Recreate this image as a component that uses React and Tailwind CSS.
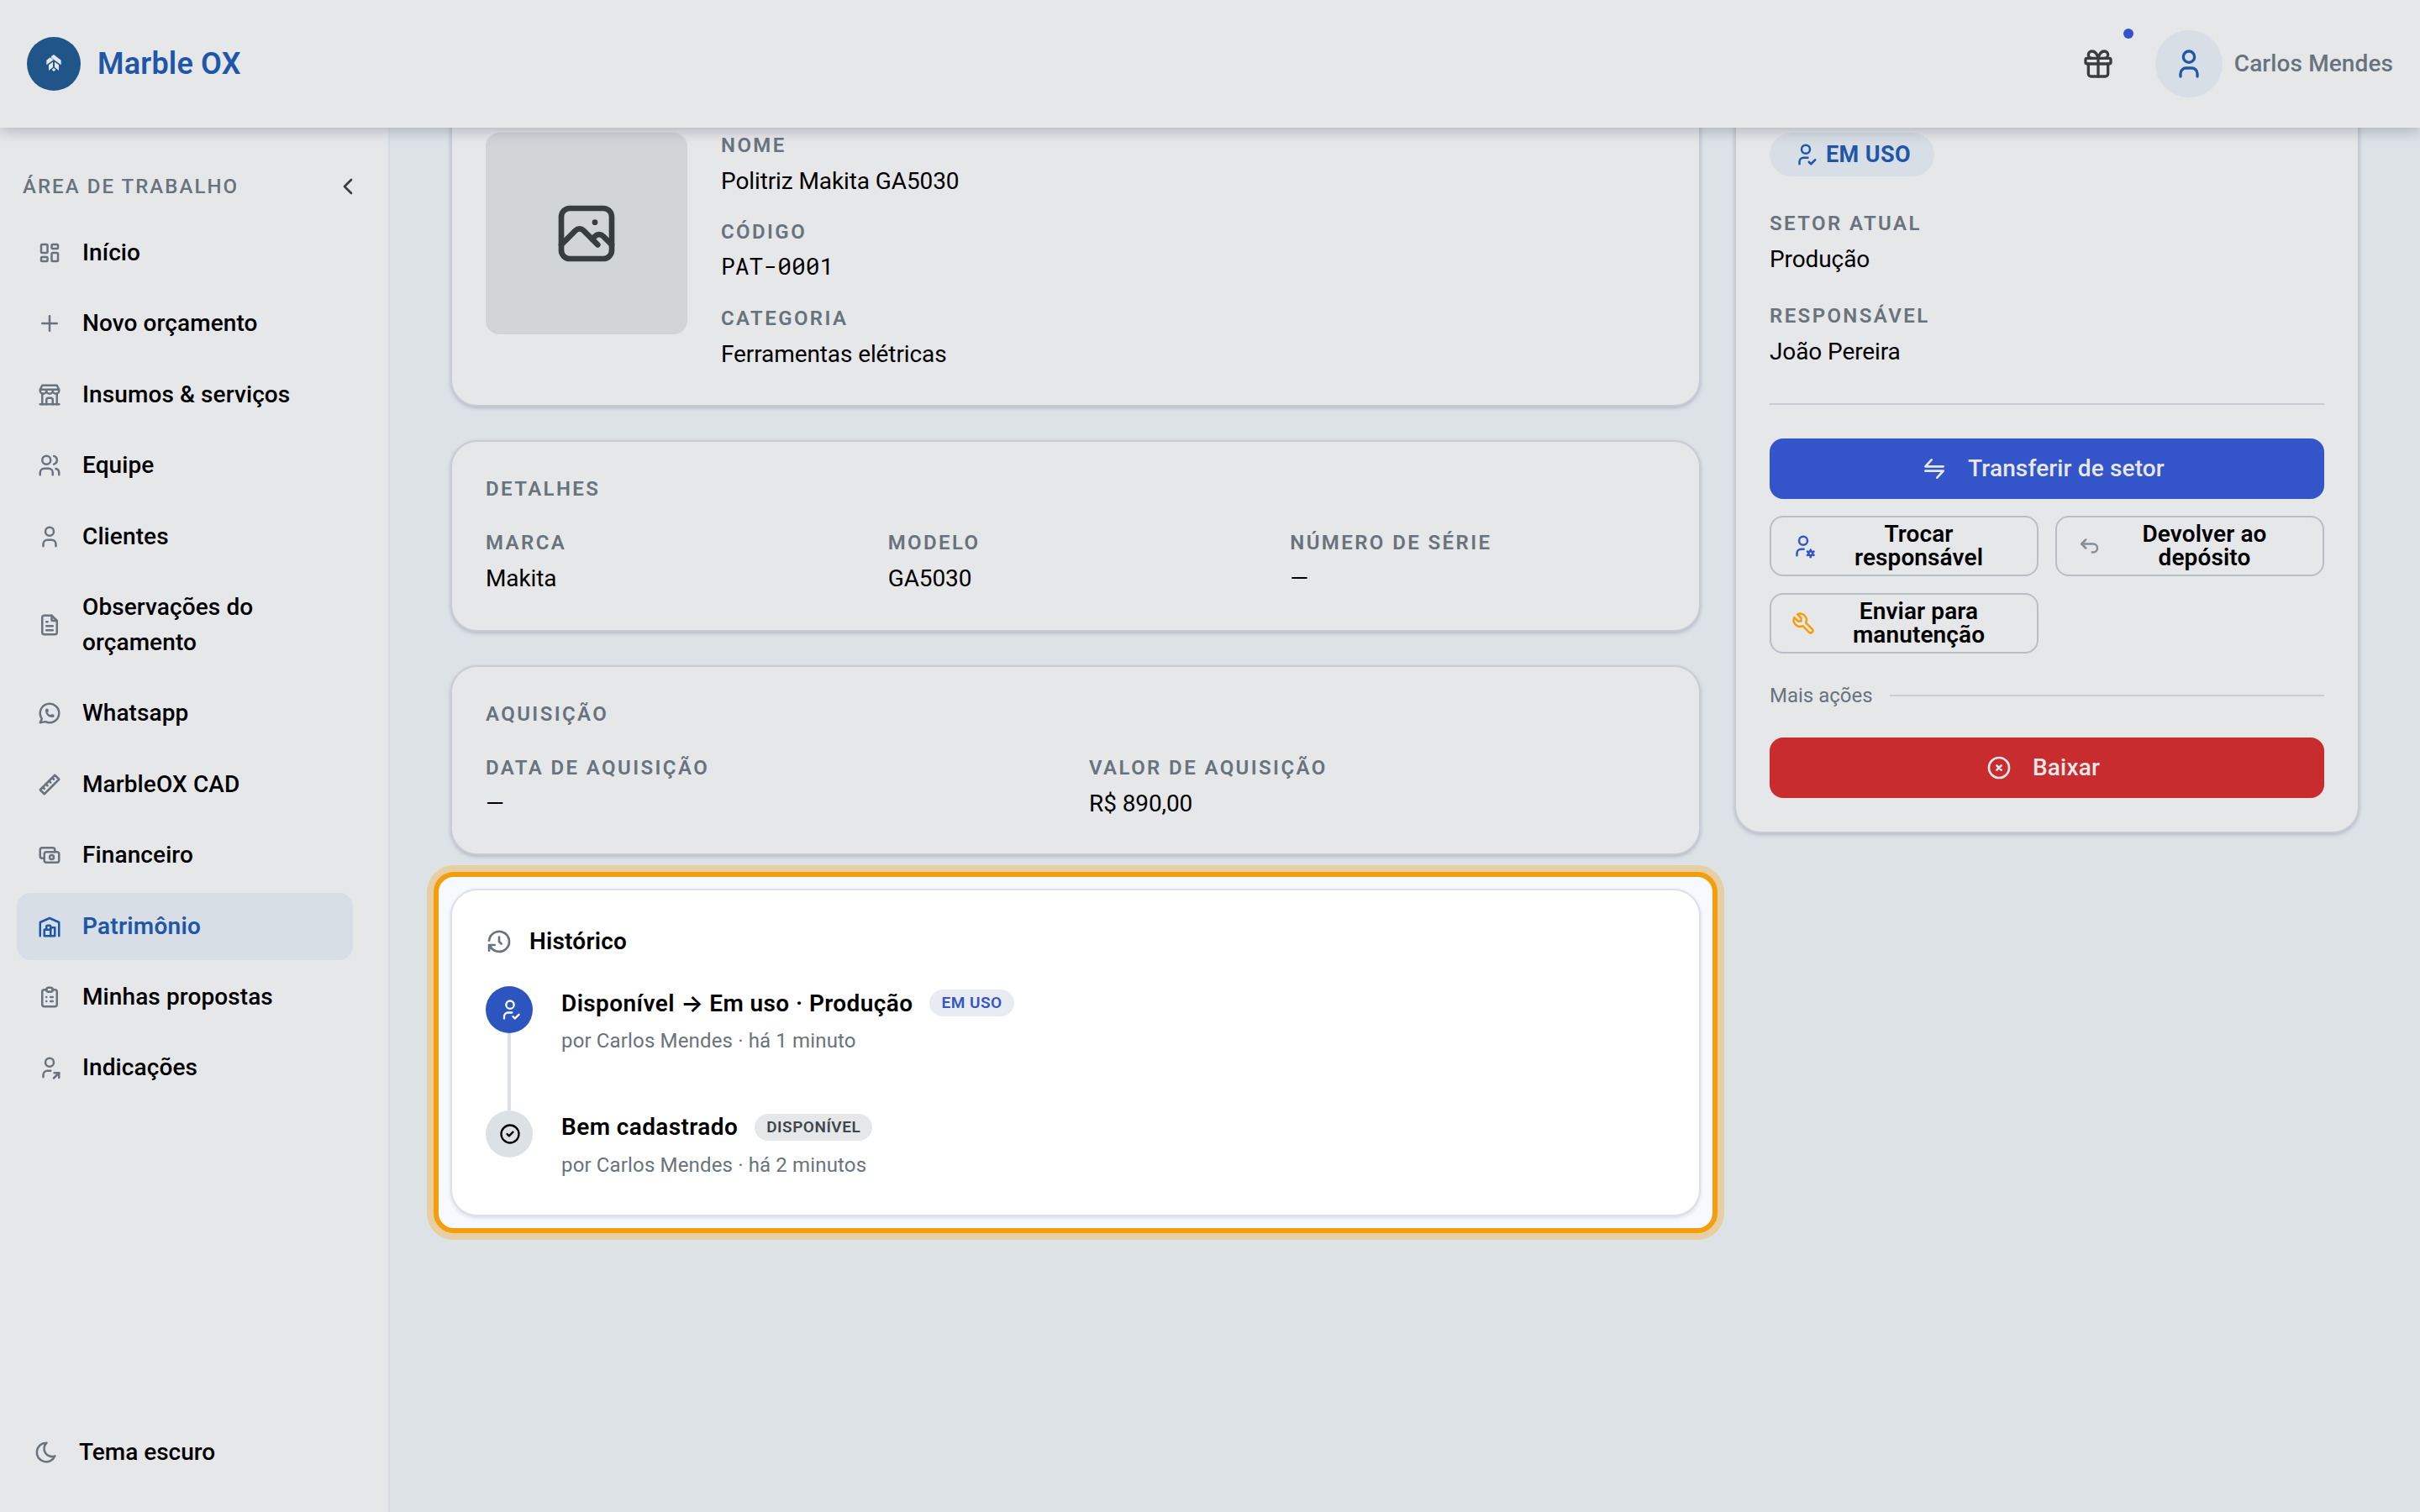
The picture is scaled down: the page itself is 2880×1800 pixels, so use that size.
import React from "react";
import {
  TbArrowBackUp,
  TbBrandWhatsapp,
  TbBuildingStore,
  TbBuildingWarehouse,
  TbCash,
  TbChevronLeft,
  TbCircleCheck,
  TbCircleX,
  TbClipboardList,
  TbFileText,
  TbGift,
  TbHistory,
  TbLayoutDashboard,
  TbMoon,
  TbPhoto,
  TbPlus,
  TbRuler2,
  TbTool,
  TbTransfer,
  TbUser,
  TbUserCheck,
  TbUserCog,
  TbUserShare,
  TbUsers,
} from "react-icons/tb";

const navItems = [
  { label: "Início", icon: TbLayoutDashboard },
  { label: "Novo orçamento", icon: TbPlus },
  { label: "Insumos & serviços", icon: TbBuildingStore },
  { label: "Equipe", icon: TbUsers },
  { label: "Clientes", icon: TbUser },
  { label: "Observações do orçamento", icon: TbFileText, tall: true },
  { label: "Whatsapp", icon: TbBrandWhatsapp },
  { label: "MarbleOX CAD", icon: TbRuler2 },
  { label: "Financeiro", icon: TbCash },
  { label: "Patrimônio", icon: TbBuildingWarehouse, active: true },
  { label: "Minhas propostas", icon: TbClipboardList },
  { label: "Indicações", icon: TbUserShare },
];

const Label = ({ children }) => (
  <span className="block text-[24px] leading-[36px] font-semibold uppercase tracking-[2.4px] text-[#69737d]">
    {children}
  </span>
);

const Field = ({ label, value, mono }) => (
  <div className="flex flex-col gap-[4px]">
    <Label>{label}</Label>
    <span
      className={`block text-[28px] leading-[42px] ${
        mono
          ? "-mt-0.5 mb-0.5 font-['Roboto_Mono','DejaVu_Sans_Mono',monospace]"
          : "tracking-[-0.1px]"
      }`}
    >
      {value}
    </span>
  </div>
);

const Card = ({ className = "", children }) => (
  <section
    className={`rounded-[32px] border-2 border-[#c9ccd3] bg-[#e6e7e9] px-10 shadow-[0_2px_4px_rgba(100,110,140,0.35)] ${className}`}
  >
    {children}
  </section>
);

const Logo = () => (
  <div className="flex size-16 items-center justify-center rounded-full bg-[#20558a]">
    <svg viewBox="0 0 52 60" className="mb-0.5 h-5 w-[18px]" fill="#e6e7e9">
      <path d="M17 6 L26 0 L52 20 V37 L17 11 Z" />
      <path d="M13 10 L25 19 L0 37 V20 Z" />
      <path d="M23 26 V45 L8 57 V37 Z" />
      <path d="M29 26 L44 37 V57 L29 45 Z" />
      <circle cx="26" cy="54" r="5.5" />
    </svg>
  </div>
);

const Header = () => (
  <header className="relative z-10 flex h-[152px] shrink-0 items-center justify-between bg-[#e6e7e9] px-8 shadow-[0_4px_16px_rgba(80,90,110,0.35)]">
    <div className="flex items-center gap-5">
      <Logo />
      <span className="text-[36px] font-semibold tracking-[0.2px] text-[#1f57a8]">
        Marble OX
      </span>
    </div>
    <div className="flex items-center">
      <div className="relative mr-[48px]">
        <TbGift className="size-10 text-[#383e40]" />
        <span className="absolute -top-[22px] left-[50px] size-3 rounded-full bg-[#3355c9]" />
      </div>
      <div className="flex size-20 items-center justify-center rounded-full bg-[#d8dee5]">
        <TbUser className="size-10 text-[#1f57a8]" />
      </div>
      <span className="ml-[14px] text-[28px] font-medium tracking-[0.1px] text-[#69737d]">
        Carlos Mendes
      </span>
    </div>
  </header>
);

const Sidebar = () => (
  <aside className="flex w-[464px] shrink-0 flex-col border-r-2 border-[#d5dce3] bg-[#e6e7e9] pl-5 pr-[42px] pt-[49px]">
    <div className="flex h-[42px] items-center justify-between pl-[7px]">
      <span className="text-[24px] font-medium uppercase tracking-[2.05px] text-[#69737d]">
        Área de trabalho
      </span>
      <TbChevronLeft className="mr-[-10px] size-8 text-[#383e40]" />
    </div>
    <nav className="mt-[18px] flex flex-col gap-[4.4px]">
      {navItems.map(({ label, icon: Icon, active, tall }) => (
        <div
          key={label}
          className={`flex items-center gap-[24px] rounded-2xl pl-6 ${
            tall ? "h-[122px]" : "h-20"
          } ${active ? "bg-[#d8dee5] text-[#1f57a8]" : "text-black"}`}
        >
          <Icon
            className={`size-[30px] shrink-0 ${active ? "" : "text-[#69737d]"}`}
          />
          <span
            className={`text-[28px] leading-[42px] ${
              active
                ? "font-semibold tracking-[0.25px]"
                : "font-medium tracking-[0.1px]"
            }`}
          >
            {label}
          </span>
        </div>
      ))}
    </nav>
    <div className="mt-auto mb-[50px] flex items-center gap-[24px] pl-[20px]">
      <TbMoon className="size-[30px] text-[#69737d]" />
      <span className="text-[28px] leading-[42px] font-medium">Tema escuro</span>
    </div>
  </aside>
);

const TimelineEvent = ({ icon: Icon, title, badge, meta, active }) => (
  <li className="flex h-[148px] gap-[34px]">
    <div className="flex w-14 shrink-0 flex-col items-center">
      <span
        className={`flex size-14 shrink-0 items-center justify-center rounded-full ${
          active ? "bg-[#2c55bf] text-white" : "bg-[#dce1e6] text-black"
        }`}
      >
        <Icon className="ml-0.5 size-[28px]" />
      </span>
      {active && <span className="w-1 flex-1 bg-[#dce1e6]" />}
    </div>
    <div>
      <div className="flex h-[40px] items-center gap-5">
        <span className="text-[28px] font-semibold tracking-[0.4px]">
          {title}
        </span>
        <span
          className={`flex h-8 items-center rounded-full px-[14px] text-[19px] font-semibold tracking-[0.5px] ${
            active ? "bg-[#e8ecf2] text-[#3355c9]" : "bg-[#e6e7e9] text-[#40464a]"
          }`}
        >
          {badge}
        </span>
      </div>
      <p className="mt-[7px] text-[24px] leading-[36px] tracking-[0.15px] text-[#69737d]">
        {meta}
      </p>
    </div>
  </li>
);

const OutlineButton = ({ icon: Icon, iconClass, children }) => (
  <button className="flex h-[72px] items-center rounded-2xl border-2 border-[#b8bec6] pl-[23px] pr-10 text-[28px] leading-[28px] font-semibold">
    <Icon className={`size-[30px] shrink-0 ${iconClass}`} />
    <span className="ml-[22px] flex-1 text-center tracking-[0.1px]">
      {children}
    </span>
  </button>
);

const SolidButton = ({ icon: Icon, className, children }) => (
  <button
    className={`flex h-[72px] w-full items-center justify-center gap-6 rounded-2xl pr-2.5 text-[28px] font-medium tracking-[0.15px] text-[#e6e7e9] ${className}`}
  >
    <Icon className="size-8" />
    {children}
  </button>
);

const App = () => {
  return (
    <div className="flex h-[1800px] w-[2880px] flex-col overflow-hidden bg-[#dde2e6] font-['Roboto',sans-serif] text-black">
      <Header />
      <div className="flex min-h-0 flex-1">
        <Sidebar />

        {/* The page is scrolled, so both columns start under the header */}
        <main className="flex flex-1 items-start gap-10 px-[72px]">
          <div className="-mt-[60px] flex w-[1488px] shrink-0 flex-col">
            <Card className="flex h-[392px] gap-10 pt-[64px]">
              <div className="flex size-60 shrink-0 items-center justify-center rounded-2xl bg-[#d1d5d8]">
                <TbPhoto className="size-20 text-[#383e40]" />
              </div>
              <div className="-mt-[3px] flex flex-col gap-[21px]">
                <Field label="Nome" value="Politriz Makita GA5030" />
                <Field label="Código" value="PAT-0001" mono />
                <Field label="Categoria" value="Ferramentas elétricas" />
              </div>
            </Card>

            <Card className="mt-10 h-[228px] pt-[38px]">
              <Label>Detalhes</Label>
              <div className="mt-[28px] grid grid-cols-3 gap-8">
                <Field label="Marca" value="Makita" />
                <Field label="Modelo" value="GA5030" />
                <Field label="Número de série" value="—" />
              </div>
            </Card>

            <Card className="mt-10 h-[226px] pt-[38px]">
              <Label>Aquisição</Label>
              <div className="mt-[28px] grid grid-cols-2 gap-8">
                <Field label="Data de aquisição" value="—" />
                <Field label="Valor de aquisição" value="R$ 890,00" />
              </div>
            </Card>

            {/* Tour spotlight around the history card */}
            <div className="-mx-[20px] mt-[20px] rounded-3xl border-[6px] border-[#f59e0b] bg-[#f6f9fe] p-[14px] shadow-[0_0_0_8px_#e6cfa3]">
              <section className="h-[390px] rounded-[32px] border-2 border-[#dce1e6] bg-white px-10 pt-[40px] shadow-[0_2px_4px_rgba(100,110,140,0.2)]">
                <h2 className="flex h-[42px] items-center gap-[20px] text-[28px] font-semibold tracking-[0.2px]">
                  <TbHistory className="size-[32px] text-[#69737d]" />
                  Histórico
                </h2>
                <ul className="mt-[32px]">
                  <TimelineEvent
                    icon={TbUserCheck}
                    title={
                      <>
                        Disponível{" "}
                        <span className="font-['Inter',sans-serif] tracking-normal">
                          →
                        </span>{" "}
                        Em uso · Produção
                      </>
                    }
                    badge="EM USO"
                    meta="por Carlos Mendes · há 1 minuto"
                    active
                  />
                  <TimelineEvent
                    icon={TbCircleCheck}
                    title="Bem cadastrado"
                    badge="DISPONÍVEL"
                    meta="por Carlos Mendes · há 2 minutos"
                  />
                </ul>
              </section>
            </div>
          </div>

          <Card className="-mt-[60px] h-[900px] w-[744px] shrink-0 pt-[64px]">
            <div className="flex h-[52px] w-[196px] items-center gap-[9px] rounded-full bg-[#d8dee5] pl-[28px] text-[27px] font-bold tracking-[0.4px] text-[#1f57a8]">
              <TbUserCheck className="size-[30px]" />
              EM USO
            </div>
            <div className="mt-[38px] flex flex-col gap-[28px]">
              <Field label="Setor atual" value="Produção" />
              <Field label="Responsável" value="João Pereira" />
            </div>
            <hr className="mt-[40px] border-t-2 border-[#c9ccd3]" />

            <SolidButton icon={TbTransfer} className="mt-10 bg-[#3355c9]">
              Transferir de setor
            </SolidButton>
            <div className="mt-5 grid grid-cols-2 gap-5">
              <OutlineButton icon={TbUserCog} iconClass="text-[#3355c9]">
                Trocar responsável
              </OutlineButton>
              <OutlineButton icon={TbArrowBackUp} iconClass="text-[#868e96]">
                Devolver ao depósito
              </OutlineButton>
              <OutlineButton icon={TbTool} iconClass="text-[#f59e0b]">
                Enviar para manutenção
              </OutlineButton>
            </div>

            <div className="mt-[32px] flex h-[36px] items-center gap-5">
              <span className="text-[24px] text-[#69737d]">Mais ações</span>
              <span className="h-0.5 flex-1 bg-[#c9ccd3]" />
            </div>
            <SolidButton icon={TbCircleX} className="mt-[32px] bg-[#c92c2f]">
              Baixar
            </SolidButton>
          </Card>
        </main>
      </div>
    </div>
  );
};

export default App;
